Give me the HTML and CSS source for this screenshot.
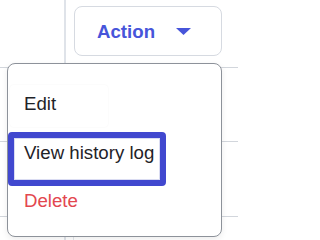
FILE: index.html
```html
<!DOCTYPE html>
<html lang="en">
<head>
<meta charset="utf-8">
<title>Action menu</title>
<link rel="stylesheet" href="styles.css">
</head>
<body>
<div class="page">
  <div class="table">
    <div class="row row-1">
      <div class="cell-left"></div>
      <div class="cell-right">
        <button class="action-btn" type="button">
          <span class="action-label">Action</span>
          <svg class="caret" width="15" height="7" viewBox="0 0 15 7" aria-hidden="true"><path d="M0 0 H15 L7.5 7 Z" fill="currentColor"/></svg>
        </button>
      </div>
    </div>
    <div class="row row-2">
      <div class="cell-left"></div>
      <div class="cell-right"></div>
    </div>
    <div class="row row-3">
      <div class="cell-left"></div>
      <div class="cell-right"></div>
    </div>
    <div class="row row-4">
      <div class="cell-left"></div>
      <div class="cell-right"><div class="inner-line"></div></div>
    </div>
  </div>
  <div class="menu" role="menu">
    <div class="item item-edit" role="menuitem">Edit</div>
    <div class="item item-focus" role="menuitem">View history log</div>
    <div class="item item-delete" role="menuitem">Delete</div>
  </div>
</div>
</body>
</html>
```
FILE: styles.css
```css
html, body {
  margin: 0;
  padding: 0;
  background: #ffffff;
}
body {
  font-family: "Liberation Sans", Arial, sans-serif;
  width: 238px;
  height: 240px;
  overflow: hidden;
}
.page {
  position: relative;
  width: 238px;
  height: 240px;
}
.table {
  display: flex;
  flex-direction: column;
}
.row {
  display: flex;
  border-bottom: 1px solid #d2d6dc;
}
.row-1 { height: 67px; }
.row-2 { height: 73px; }
.row-3 { height: 74px; }
.row-4 { height: 30px; border-bottom: none; }
.cell-left {
  width: 64px;
  border-right: 2px solid #dfe3e9;
}
.cell-right {
  flex: 1;
  padding: 6px 0 0 8px;
}
.row-4 .cell-right { padding: 0 0 0 7px; }
.inner-line {
  width: 1px;
  height: 100%;
  background: #e3e6ea;
}
.action-btn {
  box-sizing: border-box;
  width: 148px;
  height: 50px;
  display: flex;
  align-items: center;
  padding: 0 30px 0 22px;
  border: 1px solid #d6dae1;
  border-radius: 8px;
  background: #ffffff;
  color: #4755da;
  font-family: inherit;
  cursor: pointer;
}
.action-label {
  font-size: 18.67px;
  font-weight: 700;
  line-height: 21px;
}
.caret {
  margin-left: auto;
  display: block;
}
.menu {
  position: absolute;
  left: 7px;
  top: 63px;
  box-sizing: border-box;
  width: 215px;
  height: 174px;
  border: 1px solid #8d929a;
  border-radius: 8px;
  background: #ffffff;
  box-shadow: 0 2px 6px rgba(0, 0, 0, 0.08);
  display: flex;
  flex-direction: column;
  align-items: flex-start;
  padding-top: 21px;
}
.item {
  font-size: 18.67px;
  line-height: 21px;
  color: #1f2328;
}
.item-edit {
  margin-left: 2px;
  width: 32px;
  padding: 8px 52px 13px 14px;
  border-radius: 4px;
  box-shadow: 0 0 2px rgba(0, 0, 0, 0.05);
}
.item-focus {
  margin-top: 5px;
  padding: 4px 6px 17px 10px;
  border: 6px solid #4148cf;
  border-radius: 4px;
  box-shadow: inset 0 0 0 1px #dadcf2;
}
.item-delete {
  padding: 4px 0 0 16px;
  color: #e3474f;
}
```
